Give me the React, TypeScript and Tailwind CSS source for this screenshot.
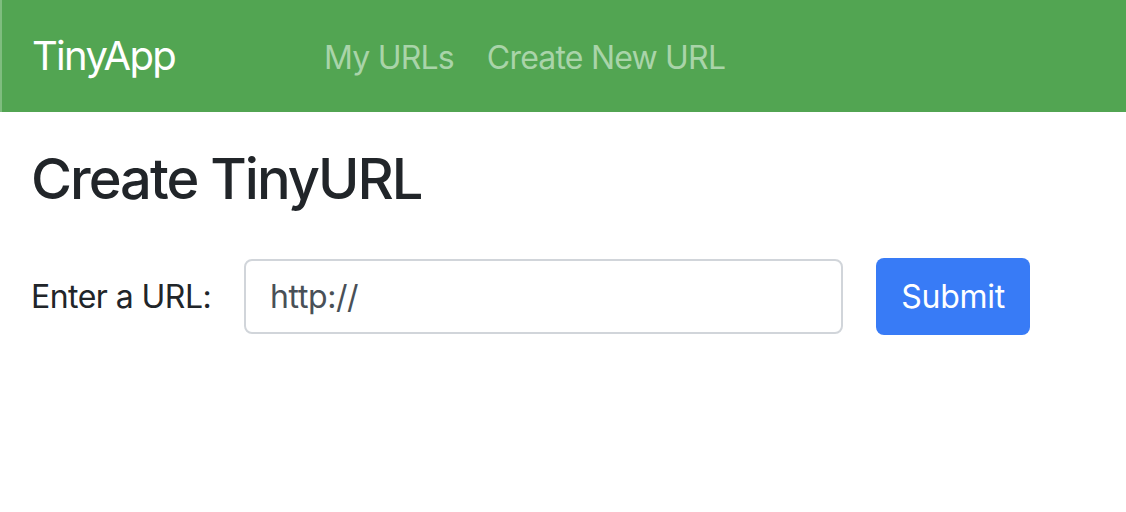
import React from "react";

export default function App() {
  return (
    <div className="min-h-[512px] w-[1126px] bg-white" style={{ fontFamily: "Inter, 'Noto Sans', sans-serif" }}>
      <nav className="flex h-[112px] items-center border-l-2 border-[#7fbd7f] bg-[#52a552] pl-[30px]">
        <span className="text-[40px] leading-none tracking-[-1.7px] text-white">TinyApp</span>
        <div className="ml-[149px] mt-[4px] flex gap-[33px] text-[32px] leading-none tracking-[-0.8px] text-[#a9d4a9]">
          <span>My URLs</span>
          <span>Create New URL</span>
        </div>
      </nav>
      <main className="px-[31px]">
        <h1 className="mt-[34px] text-[56px] font-medium leading-[1.2] tracking-[-2px] text-[#212529]">Create TinyURL</h1>
        <form className="mt-[45px] flex items-center">
          <label className="text-[32px] leading-none tracking-[-0.55px] text-[#212529]">Enter a URL:</label>
          <div className="ml-[33px] flex h-[75px] w-[599px] items-center rounded-[8px] border-2 border-[#d1d5da] px-[24px] text-[32px] tracking-[-0.4px] text-[#495057]">
            http://
          </div>
          <button type="button" className="ml-[33px] flex h-[77px] w-[154px] items-center justify-center rounded-[8px] bg-[#387bf6] text-[32px] tracking-[-0.3px] text-white">
            Submit
          </button>
        </form>
      </main>
    </div>
  );
}
